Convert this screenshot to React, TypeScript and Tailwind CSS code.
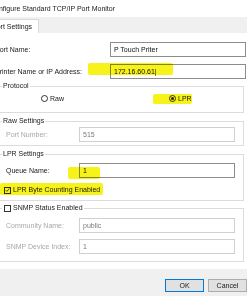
import React from "react";

type FieldProps = { value: string; disabled?: boolean; className?: string };

function Field({ value, disabled, className = "" }: FieldProps) {
  return (
    <div
      className={`flex h-[15px] items-center border bg-white px-[3px] ${
        disabled ? "border-[#d0d0d0] text-[#7a7a7a]" : "border-[#8c8c8c] text-[#111]"
      } ${className}`}
    >
      {value}
    </div>
  );
}

function Radio({ checked, label }: { checked?: boolean; label: string }) {
  return (
    <div className="flex items-center gap-[2px]">
      <span className="flex h-[7px] w-[7px] items-center justify-center rounded-full border border-[#333]">
        {checked && <span className="h-[3px] w-[3px] rounded-full bg-[#222]" />}
      </span>
      <span>{label}</span>
    </div>
  );
}

function Check({ checked, label }: { checked?: boolean; label: string }) {
  return (
    <div className="flex items-center gap-[2px]">
      <span className="flex h-[7px] w-[7px] items-center justify-center border border-[#333] bg-white">
        {checked && (
          <svg viewBox="0 0 8 8" className="h-[6px] w-[6px]">
            <path d="M1 4.2 L3 6.2 L7 1.5" fill="none" stroke="#222" strokeWidth="1.2" />
          </svg>
        )}
      </span>
      <span>{label}</span>
    </div>
  );
}

function Row({ label, value, disabled }: { label: string; value: string; disabled?: boolean }) {
  return (
    <div className="flex items-center">
      <span className={`w-[77px] pl-[4px] ${disabled ? "text-[#a8a8a8]" : ""}`}>{label}</span>
      <Field value={value} disabled={disabled} className="flex-1" />
    </div>
  );
}

const groupBox = "border border-[#dcdcdc] pl-[6px] pr-[8px]";

export default function App() {
  return (
    <div className="relative h-[296px] w-[247px] overflow-hidden bg-white font-['Liberation_Sans',Arial,sans-serif] text-[7px] leading-[8px] text-[#1a1a1a]">
      <div className="-ml-[10px] flex h-full w-[257px] flex-col">
        {/* title */}
        <div className="flex h-[17px] items-center">
          <span className="whitespace-nowrap text-[#222]">Configure Standard TCP/IP Port Monitor</span>
        </div>

        {/* tab strip */}
        <div className="flex h-[16px] items-end bg-[#f0f0f0]">
          <div className="flex h-[14px] items-center border-r border-t border-[#d9d9d9] bg-white pl-[2px] pr-[6px]">
            Port Settings
          </div>
        </div>

        {/* page */}
        <div className="flex flex-col pl-[5px] pr-[3px] pt-[9px]">
          <div className="-mr-[2px] flex items-center">
            <span className="w-[115px]">Port Name:</span>
            <Field value="P Touch Priter" className="flex-1" />
          </div>
          <div className="-mr-[2px] mt-[7px] flex items-center">
            <span className="w-[115px]">Printer Name or IP Address:</span>
            <Field value="172.16.60.61|" className="flex-1" />
          </div>

          <fieldset className={`mt-[3px] ${groupBox}`}>
            <legend className="px-[1px]">Protocol</legend>
            <div className="flex h-[22px] items-center pb-[5px]">
              <div className="ml-[39px]">
                <Radio label="Raw" />
              </div>
              <div className="ml-[105px]">
                <Radio checked label="LPR" />
              </div>
            </div>
          </fieldset>

          <fieldset className={`mt-[4px] ${groupBox}`}>
            <legend className="px-[1px]">Raw Settings</legend>
            <div className="pb-[3px] pt-[2px]">
              <Row label="Port Number:" value="515" disabled />
            </div>
          </fieldset>

          <fieldset className={`mt-[4px] ${groupBox}`}>
            <legend className="px-[1px]">LPR Settings</legend>
            <div className="flex flex-col pb-[6px] pt-[5px]">
              <Row label="Queue Name:" value="1" />
              <div className="ml-[2px] mt-[8px]">
                <Check checked label="LPR Byte Counting Enabled" />
              </div>
            </div>
          </fieldset>

          <fieldset className={`mt-[3px] ${groupBox}`}>
            <legend className="pl-[2px] pr-[1px]">
              <Check label="SNMP Status Enabled" />
            </legend>
            <div className="flex flex-col gap-[6px] pb-[7px] pt-[6px]">
              <Row label="Community Name:" value="public" disabled />
              <Row label="SNMP Device Index:" value="1" disabled />
            </div>
          </fieldset>
        </div>

        {/* footer */}
        <div className="mt-[7px] flex flex-1 items-start bg-[#f0f0f0] pl-[175px] pt-[10px]">
          <button className="flex h-[13px] w-[44px] items-center justify-center border border-[#0078d7] bg-[#e1e1e1] text-[7px]">
            OK
          </button>
          <button className="ml-[4px] flex h-[13px] w-[44px] items-center justify-center border border-[#adadad] bg-[#e1e1e1] text-[7px]">
            Cancel
          </button>
        </div>
      </div>

      {/* highlighter marks */}
      <div className="pointer-events-none absolute left-[88px] top-[63px] h-[12px] w-[85px] rounded-[2px] bg-[#f7f21a] mix-blend-multiply" />
      <div className="pointer-events-none absolute left-[153px] top-[94px] h-[10px] w-[39px] rounded-[2px] bg-[#f7f21a] mix-blend-multiply" />
      <div className="pointer-events-none absolute left-[68px] top-[167px] h-[12px] w-[32px] rounded-[2px] bg-[#f7f21a] mix-blend-multiply" />
      <div className="pointer-events-none absolute left-0 top-[183px] h-[12px] w-[103px] rounded-[2px] bg-[#f7f21a] mix-blend-multiply" />
    </div>
  );
}
